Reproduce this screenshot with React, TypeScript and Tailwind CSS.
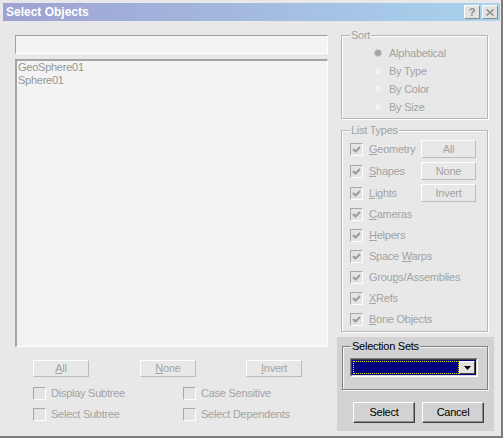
import React from "react";

const font = "font-['Liberation_Sans',Arial,sans-serif] text-[11px] leading-[13px] tracking-[-0.25px]";
const dim = "text-[#a3a3a3]";

function Check({ on }: { on?: boolean }) {
  return (
    <div className="w-[13px] h-[13px] shrink-0 border border-t-[#a8a8a8] border-l-[#a8a8a8] border-b-white border-r-white bg-[#e4e4e4] flex items-center justify-center">
      {on && (
        <svg width="9" height="9" viewBox="0 0 9 9">
          <path d="M1 4 L3.5 6.5 L8 2" fill="none" stroke="#9c9c9c" strokeWidth="2" />
        </svg>
      )}
    </div>
  );
}

function Radio({ on }: { on?: boolean }) {
  return (
    <div className="w-[12px] h-[12px] shrink-0 flex items-center justify-center">
      {on ? (
        <div className="w-[6px] h-[6px] rounded-full bg-[#a4a4a4] shadow-[0_0_0_1px_#d0d0d0]" />
      ) : (
        <div className="w-[6px] h-[6px] rounded-full bg-[#f2f2f2]" />
      )}
    </div>
  );
}

function DimButton({ children, w = "w-[56px]", h = "h-[17px]" }: { children: React.ReactNode; w?: string; h?: string }) {
  return (
    <div className={`${w} ${h} shrink-0 border border-t-white border-l-white border-b-[#bcbcbc] border-r-[#bcbcbc] flex items-center justify-center ${dim}`}>
      {children}
    </div>
  );
}

function Legend({ children, dark }: { children: React.ReactNode; dark?: boolean }) {
  return (
    <legend className={`ml-[8px] px-[1px] ${dark ? "text-black bg-[#d2d2d2]" : `${dim} bg-[#e8e8e8]`}`}>
      {children}
    </legend>
  );
}

const sortItems = ["Alphabetical", "By Type", "By Color", "By Size"];

const typeRows: { pre: string; u: string; post: string; btn?: string }[] = [
  { pre: "", u: "G", post: "eometry", btn: "All" },
  { pre: "", u: "S", post: "hapes", btn: "None" },
  { pre: "", u: "L", post: "ights", btn: "Invert" },
  { pre: "", u: "C", post: "ameras" },
  { pre: "", u: "H", post: "elpers" },
  { pre: "Space ", u: "W", post: "arps" },
  { pre: "Grou", u: "p", post: "s/Assemblies" },
  { pre: "", u: "X", post: "Refs" },
  { pre: "", u: "B", post: "one Objects" },
];

export default function App() {
  return (
    <div className={`w-[503px] h-[438px] bg-[#e8e8e8] flex flex-col border-r-2 border-b-2 border-[#7c7c7c] ${font}`}>
      {/* Title bar */}
      <div className="mt-[3px] ml-[3px] mr-[1px] h-[18px] shrink-0 bg-gradient-to-r from-[#9ea2d2] to-[#a8d3ee] flex items-center justify-between pl-[3px] pr-[2px]">
        <span className="text-white font-bold text-[12px] tracking-normal">Select Objects</span>
        <div className="flex gap-[2px]">
          <div className="w-[16px] h-[14px] bg-[#e2e2e2] border border-t-white border-l-white border-b-[#8a8a8a] border-r-[#8a8a8a] flex items-center justify-center text-[#8c8c8c] font-bold text-[11px] leading-none">
            ?
          </div>
          <div className="w-[16px] h-[14px] bg-[#e2e2e2] border border-t-white border-l-white border-b-[#8a8a8a] border-r-[#8a8a8a] flex items-center justify-center">
            <svg width="8" height="7" viewBox="0 0 8 7">
              <path d="M0.5 0.5 L7.5 6.5 M7.5 0.5 L0.5 6.5" stroke="#8c8c8c" strokeWidth="1.5" />
            </svg>
          </div>
        </div>
      </div>

      <div className="flex flex-1">
        {/* Left column */}
        <div className="ml-[15px] mt-[14px] w-[313px] flex flex-col">
          <div className="h-[19px] bg-[#f3f3f3] border border-t-[#a0a0a0] border-l-[#a0a0a0] border-b-white border-r-white" />
          <div className="mt-[5px] h-[288px] bg-[#f3f3f3] border-t-2 border-l-2 border-b border-r border-t-[#a4a4a4] border-l-[#a4a4a4] border-b-white border-r-white pl-[1px] text-[#969696]">
            <div>GeoSphere01</div>
            <div>Sphere01</div>
          </div>
          <div className="mt-[13px] pl-[18px] flex">
            <DimButton><u>A</u>ll</DimButton>
            <div className="ml-[51px]"><DimButton><u>N</u>one</DimButton></div>
            <div className="ml-[50px]"><DimButton><u>I</u>nvert</DimButton></div>
          </div>
          <div className="mt-[10px] pl-[18px] grid grid-cols-[150px_1fr] gap-y-[8px]">
            <div className="flex items-center gap-[5px]"><Check /><span className={dim}>Display Subtree</span></div>
            <div className="flex items-center gap-[5px]"><Check /><span className={dim}>Case Sensitive</span></div>
            <div className="flex items-center gap-[5px]"><Check /><span className={dim}>Select Subtree</span></div>
            <div className="flex items-center gap-[5px]"><Check /><span className={dim}>Select Dependents</span></div>
          </div>
        </div>

        {/* Right column */}
        <div className="ml-[9px] w-[157px] flex flex-col">
          <fieldset className="ml-[4px] mt-[8px] w-[147px] border border-[#b6b6b6] shadow-[inset_1px_1px_0_#fff,1px_1px_0_#fff] pt-[2px] pb-[2px]">
            <Legend>Sort</Legend>
            {sortItems.map((s, i) => (
              <div key={s} className="h-[18px] flex items-center pl-[30px] gap-[5px]">
                <Radio on={i === 0} />
                <span className={dim}>{s}</span>
              </div>
            ))}
          </fieldset>

          <fieldset className="ml-[4px] mt-[5px] w-[147px] border border-[#b6b6b6] shadow-[inset_1px_1px_0_#fff,1px_1px_0_#fff] pt-[1px] pb-[1px]">
            <Legend>List Types</Legend>
            {typeRows.map((r, i) => (
              <div key={i} className={`${i < 3 ? "h-[22px]" : "h-[21px]"} flex items-center pl-[8px] pr-[11px]`}>
                <Check on />
                <span className={`ml-[6px] ${dim}`}>
                  {r.pre}
                  <u>{r.u}</u>
                  {r.post}
                </span>
                {r.btn && (
                  <div className="ml-auto">
                    <DimButton w="w-[55px]" h="h-[18px]">{r.btn}</DimButton>
                  </div>
                )}
              </div>
            ))}
          </fieldset>

          {/* Selection sets panel */}
          <div className="mt-[5px] h-[94px] bg-[#d2d2d2] flex flex-col">
            <fieldset className="ml-[5px] mt-[3px] w-[146px] border border-[#828282] shadow-[inset_1px_1px_0_#f4f4f4,1px_1px_0_#f4f4f4] pt-[5px] pb-[12px]">
              <Legend dark>Selection Sets</Legend>
              <div className="ml-[7px] w-[128px] h-[19px] border border-t-[#808080] border-l-[#808080] border-b-white border-r-white">
                <div className="h-full border border-t-[#404040] border-l-[#404040] border-b-[#d8d8d8] border-r-[#d8d8d8] bg-[#000080] flex items-center p-[1px]">
                  <div className="flex-1 h-full border border-dotted border-[#e8e800]" />
                  <div className="w-[16px] h-full bg-[#e2e2e2] border border-t-white border-l-white border-b-[#404040] border-r-[#404040] flex items-center justify-center">
                    <svg width="7" height="4" viewBox="0 0 7 4">
                      <path d="M0 0 L7 0 L3.5 4 Z" fill="#000" />
                    </svg>
                  </div>
                </div>
              </div>
            </fieldset>
            <div className="mt-[12px] ml-[16px] flex gap-[7px]">
              {["Select", "Cancel"].map((b) => (
                <div
                  key={b}
                  className="w-[62px] h-[21px] border border-t-white border-l-white border-b-[#404040] border-r-[#404040] shadow-[inset_-1px_-1px_0_#8a8a8a] flex items-center justify-center text-black"
                >
                  {b}
                </div>
              ))}
            </div>
          </div>
        </div>
      </div>
    </div>
  );
}
